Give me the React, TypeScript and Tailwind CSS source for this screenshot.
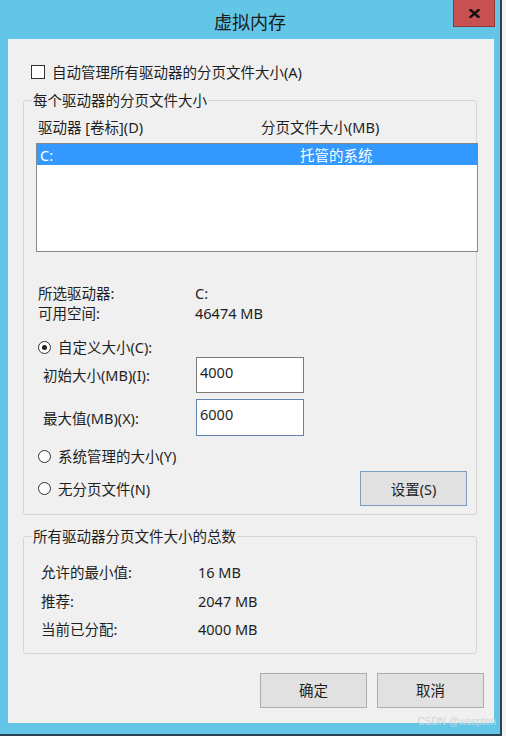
import type { ReactNode } from 'react';

type GroupProps = {
  title: string;
  className?: string;
  children: ReactNode;
};

function GroupBox({ title, className = '', children }: GroupProps) {
  return (
    <fieldset className="border border-[#d5d5d5] rounded-[3px] mx-[14px] w-[454px]">
      <legend className="ml-[8px] px-[1px] leading-[20px] text-[#1f1f1f]">
        {title}
      </legend>
      <div className={className}>{children}</div>
    </fieldset>
  );
}

function Radio({ checked = false }: { checked?: boolean }) {
  return (
    <span className="w-[13px] h-[13px] rounded-full border border-[#333] bg-white flex items-center justify-center shrink-0">
      {checked && <span className="w-[5px] h-[5px] rounded-full bg-[#222]" />}
    </span>
  );
}

function WinButton({
  label,
  focused = false,
  className = '',
}: {
  label: string;
  focused?: boolean;
  className?: string;
}) {
  return (
    <button
      type="button"
      className={`h-[35px] w-[107px] bg-[#e1e1e1] border ${
        focused ? 'border-[#7b9cbd]' : 'border-[#adadad]'
      } text-[#1f1f1f] leading-[20px] ${className}`}
    >
      {label}
    </button>
  );
}

const totales = [
  { label: '允许的最小值:', value: '16 MB' },
  { label: '推荐:', value: '2047 MB' },
  { label: '当前已分配:', value: '4000 MB' },
];

export default function App() {
  return (
    <div className="w-[506px] h-[736px] bg-[#f4f4f4] overflow-hidden font-['Noto_Sans','Noto_Sans_CJK_SC',sans-serif] text-[14.5px] text-[#1f1f1f]">
      <div className="relative w-[502px] h-[736px] bg-[#64c6e7] border-r-2 border-b-2 border-[#2c4350]">
        {/* barra de título */}
        <div className="h-[39px] flex items-center justify-center">
          <span className="text-[18px] text-[#1a1a1a] leading-[24px] mt-[4px]">
            虚拟内存
          </span>
        </div>
        <div className="absolute top-0 right-[5px] w-[42px] h-[27px] bg-[#c75050] border-x border-b border-[#8f3a36] flex items-center justify-center">
          <svg width="11" height="9" viewBox="0 0 11 9">
            <path
              d="M1.5 1 L9.5 8 M9.5 1 L1.5 8"
              stroke="#111"
              strokeWidth="2.4"
              strokeLinecap="square"
            />
          </svg>
        </div>

        {/* contenido */}
        <div className="ml-[8px] w-[486px] h-[684px] bg-[#f0f0f0] border-t border-l border-[#e9f4f8] pt-[22px]">
          <div className="flex items-center h-[20px] pl-[22px]">
            <span className="w-[14px] h-[14px] border border-[#333] bg-white shrink-0" />
            <span className="ml-[7px] leading-[20px]">
              自动管理所有驱动器的分页文件大小(A)
            </span>
          </div>

          <div className="mt-[8px]">
            <GroupBox
              title="每个驱动器的分页文件大小"
              className="pl-[12px] pb-[8px]"
            >
              <div className="flex mt-[7px] h-[20px] leading-[20px] pl-[2px]">
                <span className="w-[223px]">驱动器 [卷标](D)</span>
                <span>分页文件大小(MB)</span>
              </div>

              <div className="mt-[6px] h-[109px] bg-white border border-[#828790] -mr-[2px]">
                <div className="h-[21px] bg-[#3399ff] text-white flex items-center leading-[20px]">
                  <span className="w-[263px] pl-[3px]">C:</span>
                  <span>托管的系统</span>
                </div>
              </div>

              <div className="mt-[31px] pl-[2px] leading-[20px]">
                <div className="flex">
                  <span className="w-[157px]">所选驱动器:</span>
                  <span>C:</span>
                </div>
                <div className="flex">
                  <span className="w-[157px]">可用空间:</span>
                  <span>46474 MB</span>
                </div>
              </div>

              <div className="mt-[14px] pl-[2px] flex items-center h-[20px] gap-[7px]">
                <Radio checked />
                <span className="leading-[20px]">自定义大小(C):</span>
              </div>

              <div className="flex items-center pl-[7px] h-[36px]">
                <span className="w-[153px] leading-[20px]">初始大小(MB)(I):</span>
                <div className="w-[108px] h-[36px] bg-white border border-[#7a7a7a] pl-[3px] pt-[4px] leading-[20px]">
                  4000
                </div>
              </div>

              <div className="mt-[6px] flex items-center pl-[7px] h-[37px]">
                <span className="w-[153px] leading-[20px]">最大值(MB)(X):</span>
                <div className="w-[108px] h-[37px] bg-white border border-[#5f86b0] pl-[3px] pt-[4px] leading-[20px]">
                  6000
                </div>
              </div>

              <div className="mt-[10px] pl-[2px] flex items-center h-[20px] gap-[7px]">
                <Radio />
                <span className="leading-[20px]">系统管理的大小(Y)</span>
              </div>

              <div className="mt-[5px] flex items-center justify-between h-[35px] pl-[2px] pr-[9px]">
                <div className="flex items-center gap-[7px]">
                  <Radio />
                  <span className="leading-[20px]">无分页文件(N)</span>
                </div>
                <WinButton label="设置(S)" focused className="w-[106px]" />
              </div>
            </GroupBox>
          </div>

          <div className="mt-[11px]">
            <GroupBox
              title="所有驱动器分页文件大小的总数"
              className="pl-[17px] pb-[8px]"
            >
              <div className="mt-[13px]">
                {totales.map((fila) => (
                  <div key={fila.label} className="flex h-[28.5px] items-center">
                    <span className="w-[157px]">{fila.label}</span>
                    <span>{fila.value}</span>
                  </div>
                ))}
              </div>
            </GroupBox>
          </div>

          <div className="mt-[19px] flex justify-end gap-[10px] pr-[10px]">
            <WinButton label="确定" />
            <WinButton label="取消" />
          </div>
        </div>

        <span className="absolute right-[4px] bottom-[6px] text-[10px] leading-[12px] text-[#c9d6dd] font-['Liberation_Sans',sans-serif]">
          CSDN @wespten
        </span>
      </div>
    </div>
  );
}
